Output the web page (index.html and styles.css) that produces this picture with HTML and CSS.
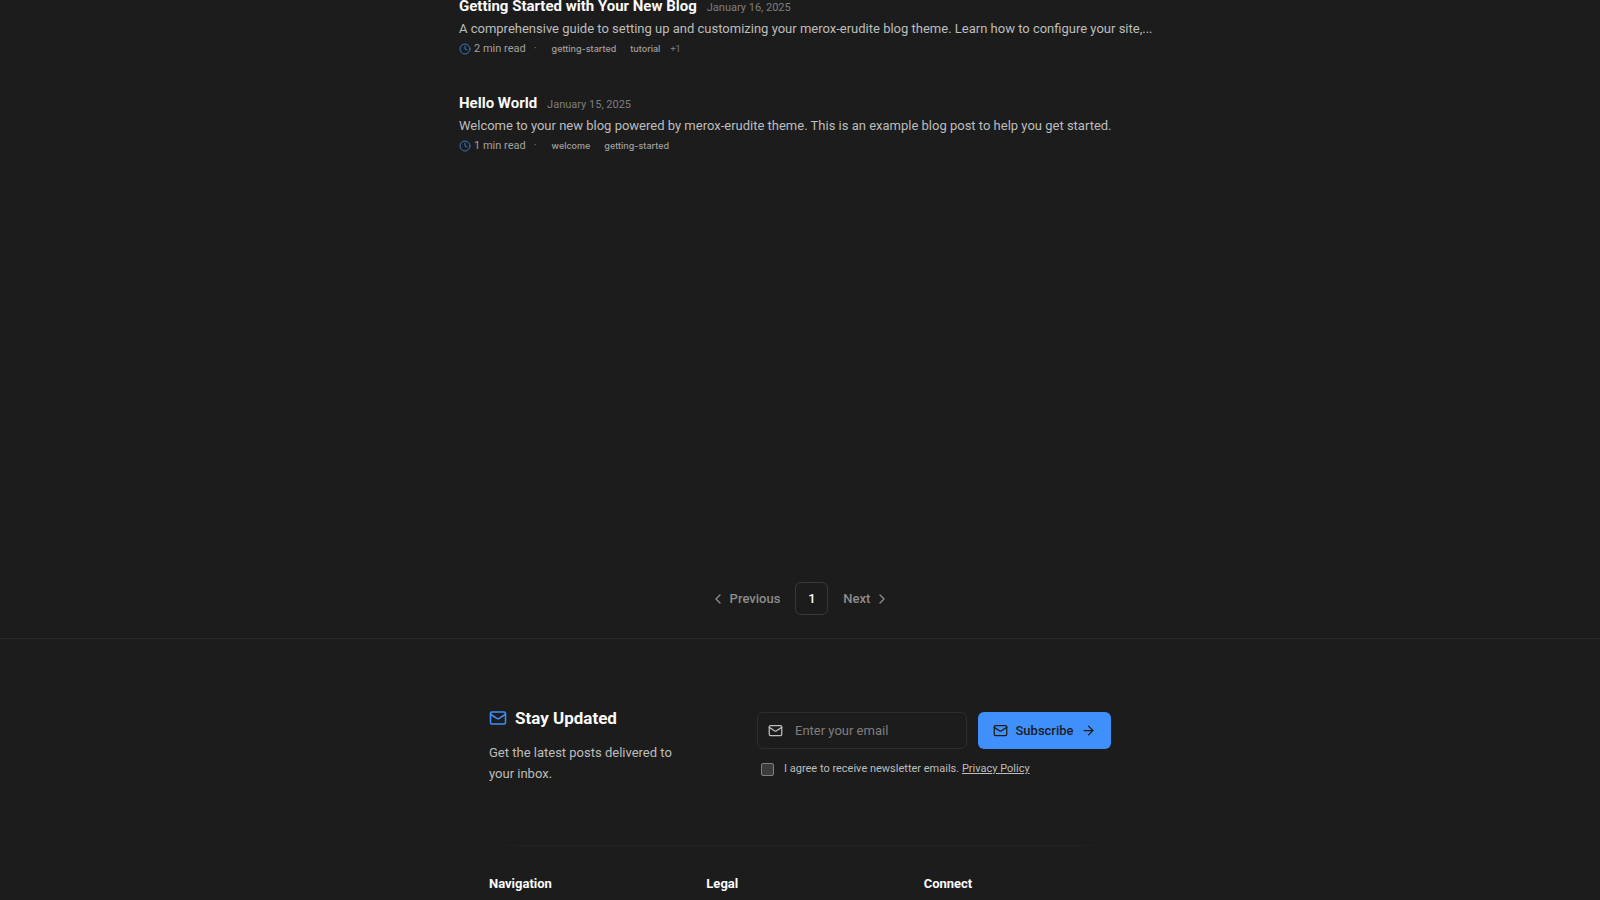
FILE: index.html
```
<!DOCTYPE html>
<html lang="en">
<head>
  <meta charset="UTF-8" />
  <meta name="viewport" content="width=device-width, initial-scale=1.0" />
  <title>Blog</title>
  <link rel="stylesheet" href="styles.css">
</head>
<body>

  <main class="container">
    <div class="post-list">
      <article class="post">
        <header class="post-header">
          <h2 class="post-title">Getting Started with Your New Blog</h2>
          <time class="post-date" datetime="2025-01-16">January 16, 2025</time>
        </header>
        <p class="post-desc">A comprehensive guide to setting up and customizing your merox-erudite blog theme. Learn how to configure your site,...</p>
        <div class="post-meta">
          <svg class="icon icon-clock" viewBox="0 0 24 24"><circle cx="12" cy="12" r="10" /><path d="M12 6v6l4 2" /></svg>
          <span>2 min read</span>
          <span class="dot">·</span>
          <span class="tag">getting-started</span>
          <span class="tag">tutorial</span>
          <span class="more">+1</span>
        </div>
      </article>

      <article class="post">
        <header class="post-header">
          <h2 class="post-title">Hello World</h2>
          <time class="post-date" datetime="2025-01-15">January 15, 2025</time>
        </header>
        <p class="post-desc">Welcome to your new blog powered by merox-erudite theme. This is an example blog post to help you get started.</p>
        <div class="post-meta">
          <svg class="icon icon-clock" viewBox="0 0 24 24"><circle cx="12" cy="12" r="10" /><path d="M12 6v6l4 2" /></svg>
          <span>1 min read</span>
          <span class="dot">·</span>
          <span class="tag">welcome</span>
          <span class="tag">getting-started</span>
        </div>
      </article>
    </div>

    <nav class="pagination" aria-label="Pagination">
      <a class="page-link" href="#">
        <svg class="icon" viewBox="0 0 24 24"><path d="m15 18-6-6 6-6" /></svg>
        Previous
      </a>
      <a class="page-current" href="#" aria-current="page">1</a>
      <a class="page-link" href="#">
        Next
        <svg class="icon" viewBox="0 0 24 24"><path d="m9 18 6-6-6-6" /></svg>
      </a>
    </nav>
  </main>

  <footer class="footer">
    <div class="footer-inner">
      <section class="newsletter">
        <div class="newsletter-intro">
          <h2 class="newsletter-title">
            <svg class="icon icon-title" viewBox="0 0 24 24"><rect x="2" y="4" width="20" height="16" rx="2" /><path d="m22 7-8.97 5.7a1.94 1.94 0 0 1-2.06 0L2 7" /></svg>
            Stay Updated
          </h2>
          <p class="newsletter-text">Get the latest posts delivered to your inbox.</p>
        </div>

        <form class="newsletter-form">
          <div class="form-row">
            <label class="email-field">
              <svg class="icon icon-mail" viewBox="0 0 24 24"><rect x="2" y="4" width="20" height="16" rx="2" /><path d="m22 7-8.97 5.7a1.94 1.94 0 0 1-2.06 0L2 7" /></svg>
              <input type="email" class="email-input" aria-label="Email" placeholder="Enter your email" />
            </label>
            <button type="submit" class="subscribe">
              <svg class="icon icon-mail" viewBox="0 0 24 24"><rect x="2" y="4" width="20" height="16" rx="2" /><path d="m22 7-8.97 5.7a1.94 1.94 0 0 1-2.06 0L2 7" /></svg>
              Subscribe
              <svg class="icon icon-mail" viewBox="0 0 24 24"><path d="M5 12h14" /><path d="m12 5 7 7-7 7" /></svg>
            </button>
          </div>
          <div class="consent">
            <input type="checkbox" id="consent" class="consent-box" />
            <label for="consent">I agree to receive newsletter emails. <a href="#">Privacy Policy</a></label>
          </div>
        </form>
      </section>

      <div class="footer-divider"></div>

      <div class="footer-links">
        <h3>Navigation</h3>
        <h3>Legal</h3>
        <h3>Connect</h3>
      </div>
    </div>
  </footer>

</body>
</html>
```

FILE: styles.css
```
* {
  box-sizing: border-box;
}

body {
  margin: 0;
  background: #1c1c1c;
  color: #fafafa;
  font-family: Roboto, "Liberation Sans", sans-serif;
  font-size: 13px;
  line-height: 20px;
  overflow-x: hidden;
}

h2, h3, p {
  margin: 0;
}

a {
  color: inherit;
  text-decoration: none;
}

.icon {
  width: 16px;
  height: 16px;
  flex-shrink: 0;
  fill: none;
  stroke: currentColor;
  stroke-width: 2;
  stroke-linecap: round;
  stroke-linejoin: round;
}

.container {
  max-width: 682px;
  margin: -6px auto 0;
}

/* posts */
.post-list {
  display: flex;
  flex-direction: column;
  gap: 32px;
  min-height: 588px;
}

.post-header {
  display: flex;
  align-items: baseline;
  gap: 10px;
}

.post-title {
  font-size: 15px;
  line-height: 24px;
  font-weight: 700;
}

.post-date {
  font-size: 11px;
  color: #7e7e7e;
}

.post-desc {
  line-height: 21px;
  color: #bdbdbd;
  white-space: nowrap;
}

.post-meta {
  display: flex;
  align-items: center;
  font-size: 11px;
  color: #a0a0a0;
}

.icon-clock {
  width: 12px;
  height: 12px;
  margin-right: 3px;
  color: #3574c6;
}

.dot {
  margin: 0 8px;
  color: #7e7e7e;
}

.tag {
  padding: 0 7px;
  font-family: Inter, sans-serif;
  font-size: 9px;
  font-weight: 500;
}

.more {
  margin-left: 3px;
  font-size: 9px;
  color: #7e7e7e;
}

/* pagination */
.pagination {
  display: flex;
  justify-content: center;
  align-items: center;
  gap: 15px;
  padding-bottom: 23px;
  font-weight: 500;
}

.page-link {
  display: flex;
  align-items: center;
  gap: 4px;
  color: #8c8c8c;
}

.page-current {
  width: 33px;
  height: 33px;
  border: 1px solid #383838;
  border-radius: 6px;
  line-height: 31px;
  text-align: center;
}

/* footer */
.footer {
  border-top: 1px solid #292929;
  padding: 69px 0 6px;
}

.footer-inner {
  max-width: 622px;
  margin: 0 auto;
}

.newsletter {
  display: grid;
  grid-template-columns: 200px 354px;
  justify-content: space-between;
  padding-bottom: 61px;
}

.newsletter-title {
  display: flex;
  align-items: center;
  gap: 8px;
  margin-bottom: 14px;
  font-size: 17px;
  line-height: 20px;
  font-weight: 700;
}

.icon-title {
  width: 18px;
  height: 18px;
  color: #4090fc;
}

.newsletter-text {
  line-height: 21px;
  color: #bdbdbd;
}

.form-row {
  display: flex;
  gap: 11px;
  padding-top: 4px;
}

.email-field {
  display: flex;
  align-items: center;
  gap: 12px;
  flex: 1;
  min-width: 0;
  height: 37px;
  padding: 0 10px;
  border: 1px solid #2d2d2d;
  border-radius: 6px;
  color: #bdbdbd;
}

.icon-mail {
  width: 15px;
  height: 15px;
}

.email-input {
  flex: 1;
  min-width: 0;
  padding: 0;
  border: none;
  outline: none;
  background: transparent;
  color: #fafafa;
  font: inherit;
}

.email-input::placeholder {
  color: #7e7e7e;
}

.subscribe {
  display: flex;
  align-items: center;
  justify-content: center;
  gap: 7px;
  width: 133px;
  height: 37px;
  padding: 0;
  border: none;
  border-radius: 6px;
  background: #4090fc;
  color: #1c1c1c;
  font: inherit;
  font-weight: 500;
  cursor: pointer;
}

.consent {
  display: flex;
  align-items: center;
  gap: 10px;
  margin-top: 10px;
  padding-left: 4px;
  font-size: 11px;
  color: #bdbdbd;
}

.consent a {
  text-decoration: underline;
}

.consent-box {
  appearance: none;
  width: 13px;
  height: 13px;
  margin: 0;
  border: 1px solid #808080;
  border-radius: 2px;
  background: #3b3b3b;
}

.footer-divider {
  height: 1px;
  background: linear-gradient(to right, transparent, #222 5%, #222 95%, transparent);
}

.footer-links {
  display: grid;
  grid-template-columns: repeat(3, 1fr);
  gap: 30px;
  padding-top: 28px;
}

.footer-links h3 {
  font-size: 13px;
  font-weight: 700;
}
```
